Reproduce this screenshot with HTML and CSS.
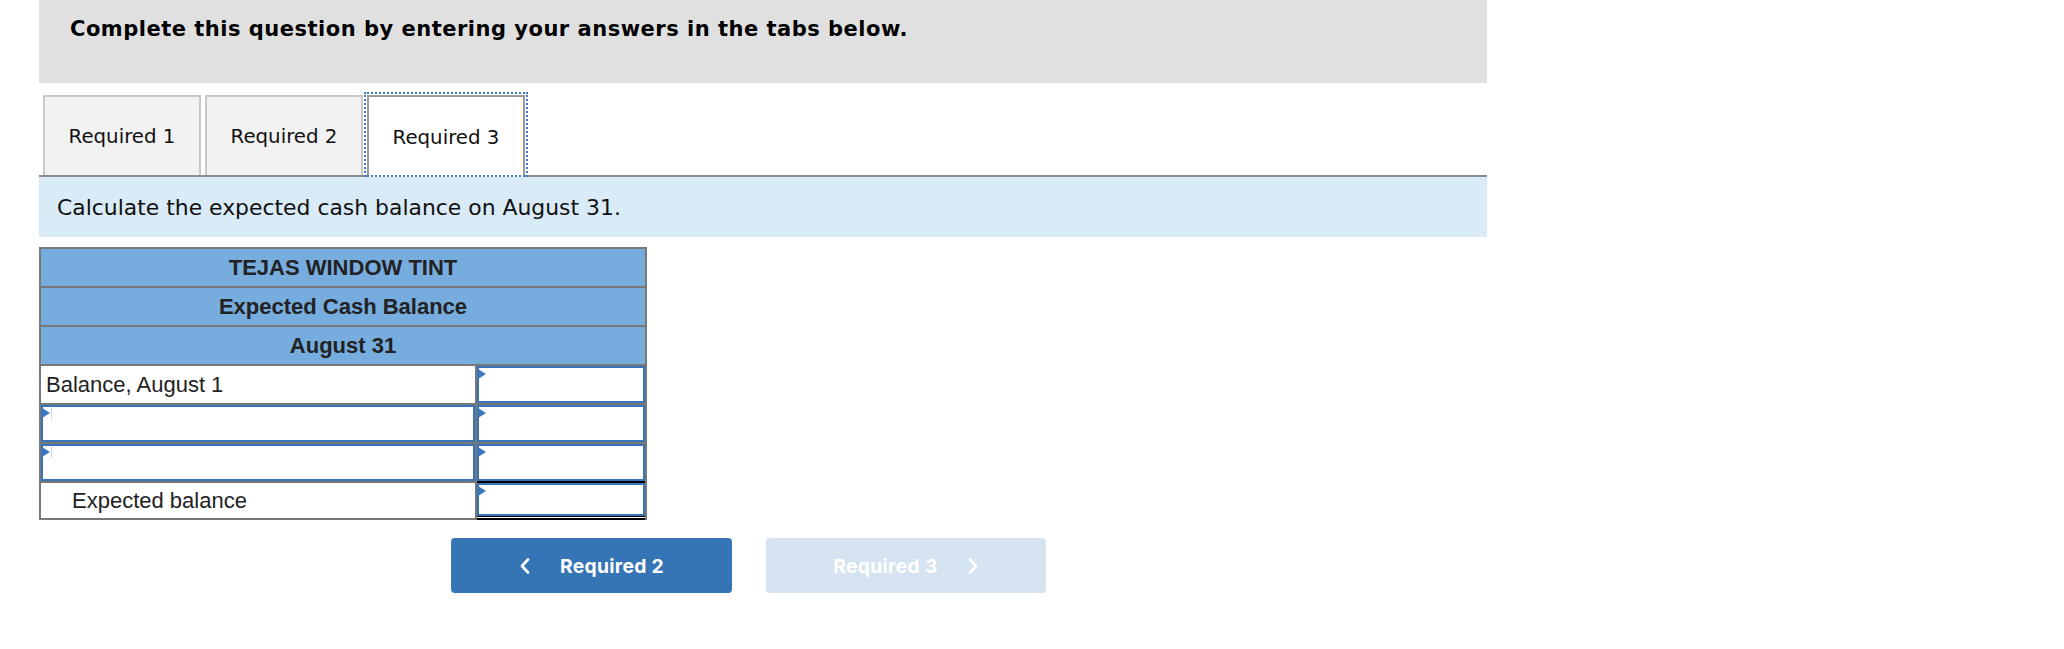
FILE: index.html
```html
<!DOCTYPE html>
<html lang="en">
<head>
<meta charset="utf-8">
<title>Required 3</title>
<link rel="stylesheet" href="styles.css">
</head>
<body>
<div class="page">
  <div class="prompt">Complete this question by entering your answers in the tabs below.</div>

  <div class="tabs">
    <div class="tab">Required 1</div>
    <div class="tab">Required 2</div>
    <div class="tab active">Required 3</div>
  </div>

  <div class="instr">Calculate the expected cash balance on August 31.</div>

  <div class="sheet">
    <div class="hd">TEJAS WINDOW TINT</div>
    <div class="hd">Expected Cash Balance</div>
    <div class="hd">August 31</div>

    <div class="lbl">Balance, August 1</div>
    <div class="cell"><div class="inp"><span class="mark"></span></div></div>

    <div class="cell"><div class="inp"><span class="mark"></span><span class="caret"></span></div></div>
    <div class="cell"><div class="inp"><span class="mark"></span></div></div>

    <div class="cell"><div class="inp"><span class="mark"></span><span class="caret"></span></div></div>
    <div class="cell sub"><div class="inp"><span class="mark"></span></div></div>

    <div class="lbl indent">Expected balance</div>
    <div class="cell total"><div class="inp"><span class="mark"></span></div><div class="dbl"></div></div>
  </div>

  <div class="nav">
    <button class="btn prev" type="button">
      <svg class="chev" width="12" height="16" viewBox="0 0 12 16"><polyline points="9,1.5 3,8 9,14.5" fill="none" stroke="#fff" stroke-width="2.6" stroke-linecap="round" stroke-linejoin="round"/></svg>
      <span>Required 2</span>
    </button>
    <button class="btn next" type="button">
      <span>Required 3</span>
      <svg class="chev" width="12" height="16" viewBox="0 0 12 16"><polyline points="3,1.5 9,8 3,14.5" fill="none" stroke="#fff" stroke-width="2.6" stroke-linecap="round" stroke-linejoin="round"/></svg>
    </button>
  </div>
</div>
</body>
</html>
```

FILE: styles.css
```css
* { box-sizing: border-box; }

body {
  margin: 0;
  background: #fff;
  color: #111;
  font-family: "DejaVu Sans", Verdana, sans-serif;
}

.page {
  margin-left: 39px;
  width: 1448px;
}

.prompt {
  height: 83px;
  background: #e0e0e0;
  padding: 17px 0 0 31px;
  font-weight: bold;
  font-size: 21px;
  letter-spacing: 0.5px;
  line-height: 24px;
  color: #000;
}

.tabs {
  display: flex;
  align-items: flex-start;
  gap: 4px;
  margin-top: 12px;
  padding-left: 4px;
  border-bottom: 2px solid #8c8c8c;
}

.tab {
  width: 158px;
  height: 80px;
  display: flex;
  align-items: center;
  justify-content: center;
  background: #f2f2f2;
  border: 2px solid #c8c8c8;
  border-bottom: none;
  font-size: 19.8px;
  color: #111;
}

.tab.active {
  position: relative;
  height: 82px;
  margin-bottom: -2px;
  background: #fff;
  border-color: #9a9a9a;
}

.tab.active::after {
  content: "";
  position: absolute;
  top: -5px;
  left: -5px;
  right: -5px;
  bottom: 0;
  border: 2px dotted #3d7bc6;
}

.instr {
  height: 60px;
  display: flex;
  align-items: center;
  padding-left: 18px;
  background: #d9ebf7;
  font-size: 21.9px;
  color: #111;
}

.sheet {
  margin-top: 10px;
  width: 608px;
  display: grid;
  grid-template-columns: 434px 168px;
  grid-template-rows: 37px 37px 37px 37px 37px 37px 35px;
  gap: 2px;
  padding: 2px;
  background: #787878;
  font-family: "Liberation Sans", Arial, sans-serif;
  font-size: 22px;
}

.hd {
  grid-column: 1 / -1;
  display: flex;
  align-items: center;
  justify-content: center;
  background: #77acdf;
  font-weight: bold;
  color: #222;
}

.lbl {
  display: flex;
  align-items: center;
  padding-left: 5px;
  background: #fff;
  color: #222;
}

.lbl.indent { padding-left: 31px; }

.cell {
  display: flex;
  flex-direction: column;
  background: #fff;
}

.inp {
  position: relative;
  flex: 1;
  border: 2px solid #3a74b8;
  background: #fff;
}

.mark {
  position: absolute;
  top: 1px;
  left: -1px;
  width: 0;
  height: 0;
  border-left: 8px solid #3a78c2;
  border-top: 5px solid transparent;
  border-bottom: 5px solid transparent;
}

.caret {
  position: absolute;
  top: 0;
  left: 8px;
  width: 1px;
  height: 12px;
  background: #c3d6ec;
}

.cell.sub { box-shadow: 0 2px 0 #000; }

.cell.total { box-shadow: 0 2px 0 #000; }

.dbl {
  height: 2px;
  border-top: 1px solid #000;
  background: #fff;
}

.nav {
  display: flex;
  gap: 34px;
  margin: 18px 0 0 412px;
}

.btn {
  width: 281px;
  height: 55px;
  display: flex;
  align-items: center;
  justify-content: center;
  gap: 29px;
  border: none;
  border-radius: 4px;
  padding: 0;
  font-family: Inter, "Noto Sans", sans-serif;
  font-weight: bold;
  font-size: 19.3px;
  letter-spacing: 0.3px;
  color: #fff;
  cursor: pointer;
}

.btn.prev { background: #3575b5; }

.btn.next {
  width: 280px;
  background: #d6e3f0;
  cursor: default;
}

.chev { display: block; }
```
